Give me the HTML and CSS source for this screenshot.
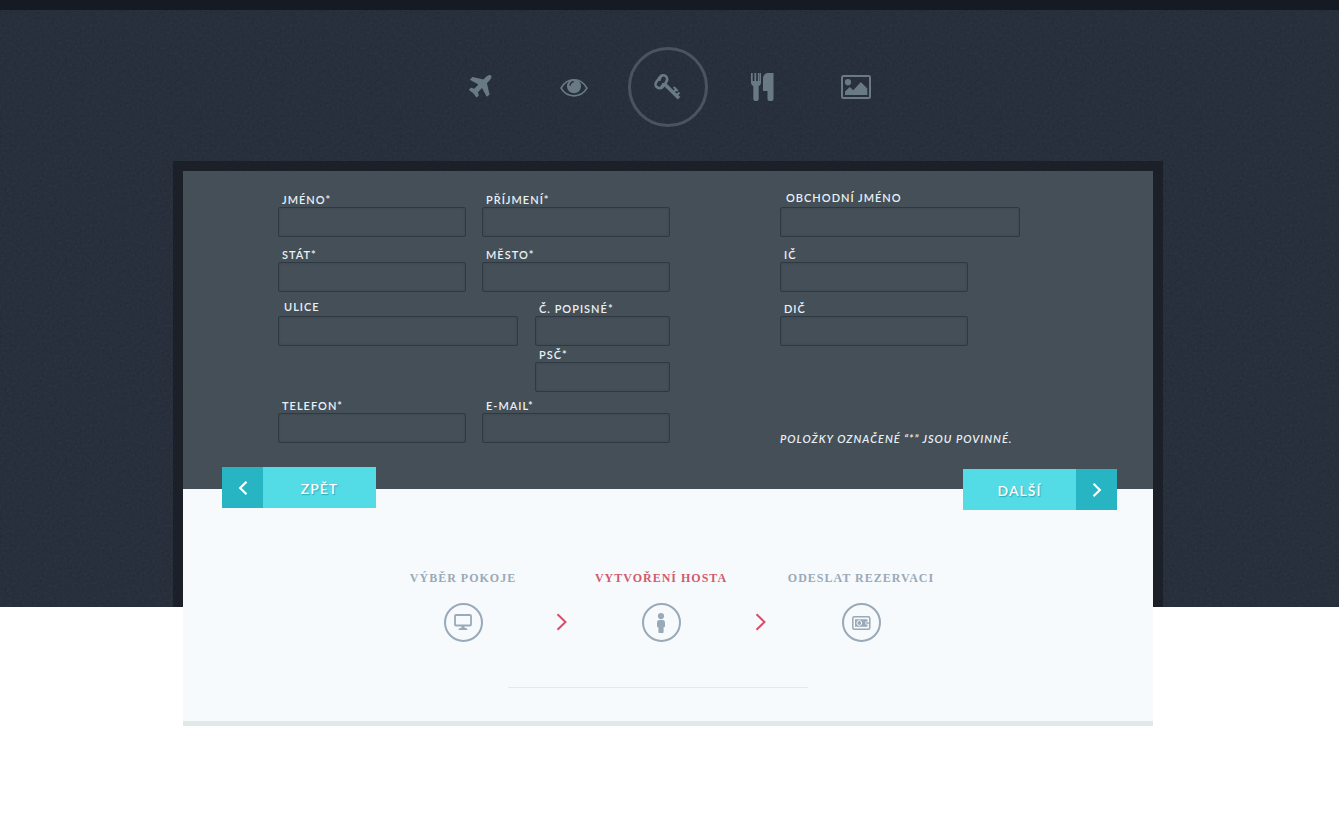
FILE: index.html
```html
<!DOCTYPE html>
<html lang="cs">
<head>
<meta charset="utf-8">
<meta name="viewport" content="width=device-width, initial-scale=1">
<title>Rezervace – vytvoření hosta</title>
<link rel="stylesheet" href="styles.css">
</head>
<body>
<div class="hero">
  <nav class="menu" aria-label="Hlavní menu">
    <a class="menu-link" href="#doprava" aria-label="Doprava">
      <svg width="23" height="24" viewBox="210 130 1400 1500"><path d="M1568 160q44 52 12 148t-108 172l-161 161 160 696q5 19-12 33l-128 96q-7 6-19 6-4 0-7-1-15-3-21-16l-279-508-259 259 53 194q5 17-8 31l-96 96q-9 9-23 9h-2q-15-2-24-13l-189-252-252-189q-11-7-13-23-1-13 9-25l96-97q9-9 23-9 6 0 8 1l194 53 259-259-508-279q-14-8-17-24-2-16 9-27l128-128q14-13 30-8l665 159 160-160q76-76 172-108t148 12z"/></svg>
    </a>
    <a class="menu-link" href="#okoli" aria-label="Okolí">
      <svg width="28" height="20" viewBox="0 0 28 20"><path d="M1 11.200C4 5.700 8.500 2.700 14 2.700s10 3 13 8.500c-3 5-7.500 7.700-13 7.700S4 16.200 1 11.200z" fill="none" stroke="currentColor" stroke-width="1.600"/><circle cx="14" cy="9.300" r="7"/><path d="M10 8.800c0-2.400 1.500-4 3.800-4" class="cut" stroke-width="1.500"/></svg>
    </a>
    <a class="menu-link menu-link--active" href="#ubytovani" aria-label="Ubytování" aria-current="page">
      <svg width="28" height="26" viewBox="0 0 28 26"><g fill="none" stroke="currentColor"><path d="M9.200 5.300 5.600 10.300" stroke-width="10.600" stroke-linecap="round"/><path d="M11 10.500 25 24.300" stroke-width="3.600"/><path d="M19 18.500l3.700-3.700M22.300 21.700l3.200-3.200M19.700 13l4 4" stroke-width="2"/></g><path d="M9.600 4.800 8.900 6.500M5.800 9.100 5 10.400" class="cut" stroke-width="4.600" stroke-linecap="round"/><path d="M9 6 5.800 10" class="cut" stroke-width="2.500"/></svg>
    </a>
    <a class="menu-link" href="#restaurace" aria-label="Restaurace">
      <svg width="23" height="28" viewBox="0 0 23 28"><path d="M0 0h1.700v8h1.700V0h1.800v8h1.700V0h1.700v8h.4V0h1v9.500c0 1.700-.8 2.800-2.300 3.500V26a2 2 0 0 1-2 2H4.300a2 2 0 0 1-2-2V13C.8 12.300 0 11.200 0 9.500zM22.500 0v26a2 2 0 0 1-2 2h-2a2 2 0 0 1-2-2v-8H12V5.500C12 2 14.500 0 18 0z"/></svg>
    </a>
    <a class="menu-link" href="#galerie" aria-label="Galerie">
      <svg width="30" height="24" viewBox="0 0 30 24"><rect x="1" y="1" width="28" height="22" rx="1.500" fill="none" stroke="currentColor" stroke-width="2"/><circle cx="7" cy="7.200" r="3.100"/><path d="M4 20v-3.500l4.800-4.600 3.500 3.300L19.800 7l6.500 6.500V20z"/></svg>
    </a>
  </nav>

  <main class="frame">
    <div class="booking">
      <form class="guest" action="#" method="post">
        <div class="guest-fields">
          <div class="person">
            <div class="row">
              <div class="field"><label for="jmeno">JMÉNO*</label><input id="jmeno" name="jmeno" type="text" required></div>
              <div class="field"><label for="prijmeni">PŘÍJMENÍ*</label><input id="prijmeni" name="prijmeni" type="text" required></div>
            </div>
            <div class="row">
              <div class="field"><label for="stat">STÁT*</label><input id="stat" name="stat" type="text" required></div>
              <div class="field"><label for="mesto">MĚSTO*</label><input id="mesto" name="mesto" type="text" required></div>
            </div>
            <div class="row row--address">
              <div class="field field--wide"><label for="ulice">ULICE</label><input id="ulice" name="ulice" type="text"></div>
              <div class="stack">
                <div class="field field--short"><label for="cislo">Č. POPISNÉ*</label><input id="cislo" name="cislo" type="text" required></div>
                <div class="field field--short"><label for="psc">PSČ*</label><input id="psc" name="psc" type="text" required></div>
              </div>
            </div>
            <div class="row row--contact">
              <div class="field"><label for="telefon">TELEFON*</label><input id="telefon" name="telefon" type="tel" required></div>
              <div class="field"><label for="email">E-MAIL*</label><input id="email" name="email" type="email" required></div>
            </div>
          </div>
          <div class="company">
            <div class="row">
              <div class="field field--wide"><label for="firma">OBCHODNÍ JMÉNO</label><input id="firma" name="firma" type="text"></div>
            </div>
            <div class="row">
              <div class="field"><label for="ic">IČ</label><input id="ic" name="ic" type="text"></div>
            </div>
            <div class="row row--address">
              <div class="field"><label for="dic">DIČ</label><input id="dic" name="dic" type="text"></div>
            </div>
            <p class="note">POLOŽKY OZNAČENÉ “*” JSOU POVINNÉ.</p>
          </div>
        </div>
        <div class="actions">
          <button class="button button--back" type="button"><span class="button-icon"><svg width="10" height="14" viewBox="0 0 10 14"><path d="M8.500 .8 2.200 7l6.300 6.200"/></svg></span><span class="button-text">ZPĚT</span></button>
          <button class="button button--next" type="submit"><span class="button-text">DALŠÍ</span><span class="button-icon"><svg width="10" height="14" viewBox="0 0 10 14"><path d="M1.500 .8 7.800 7l-6.300 6.200"/></svg></span></button>
        </div>
      </form>

      <section class="progress" aria-label="Průběh rezervace">
        <ol class="steps">
          <li class="step">
            <span class="step-name">VÝBĚR POKOJE</span>
            <span class="step-icon"><svg width="18" height="17" viewBox="0 0 18 17"><rect x="1" y="1" width="16" height="10.500" rx="1" fill="none" stroke="currentColor" stroke-width="1.800"/><path d="M7.500 12h3v1.800c2 .2 3 .9 3 2.200h-9c0-1.300 1-2 3-2.200z"/></svg></span>
          </li>
          <li class="arrow" aria-hidden="true"><svg width="12" height="18" viewBox="0 0 12 18"><path d="M1.500 1.200 9.500 9 1.500 16.800"/></svg></li>
          <li class="step step--current" aria-current="step">
            <span class="step-name">VYTVOŘENÍ HOSTA</span>
            <span class="step-icon"><svg width="8" height="20" viewBox="0 0 8 20"><circle cx="4" cy="3.100" r="3.100"/><path d="M2.200 7h3.600C7.200 7 8 8.200 8 9.800V13c0 .8-.5 1.300-1.400 1.300V19c0 .7-.4 1-1 1H2.400c-.6 0-1-.3-1-1v-4.700C.5 14.300 0 13.800 0 13V9.800C0 8.200.8 7 2.200 7z"/></svg></span>
          </li>
          <li class="arrow" aria-hidden="true"><svg width="12" height="18" viewBox="0 0 12 18"><path d="M1.500 1.200 9.500 9 1.500 16.800"/></svg></li>
          <li class="step">
            <span class="step-name">ODESLAT REZERVACI</span>
            <span class="step-icon"><svg width="19" height="14" viewBox="0 0 19 14"><rect x=".8" y=".8" width="17" height="12.400" rx="1.500" fill="none" stroke="currentColor" stroke-width="1.500"/><path d="M3 3.300h12.500v2.200h-2v3h2v2.200H3z"/><circle cx="7.300" cy="7" r="2.400" class="ring"/><path d="M14 7h4" fill="none" stroke="currentColor" stroke-width="1.400"/></svg></span>
          </li>
        </ol>
        <hr class="divider">
      </section>
    </div>
  </main>
</div>
</body>
</html>
```

FILE: styles.css
```css
* {
  box-sizing: border-box;
}

body {
  min-height: 100vh;
  margin: 0;
  background: #fff;
  font-family: Lato, "Open Sans", sans-serif;
}

/* Dark textured band; the booking card hangs out of its lower edge */
.hero {
  display: flex;
  flex-direction: column;
  align-items: center;
  padding-right: 3px;
  border-top: 10px solid #161a23;
  background-color: #222a37;
  background-image: url("data:image/svg+xml,%3Csvg xmlns='http://www.w3.org/2000/svg' width='200' height='200'%3E%3Cfilter id='n'%3E%3CfeTurbulence type='fractalNoise' baseFrequency='0.4' numOctaves='2' stitchTiles='stitch'/%3E%3CfeColorMatrix type='saturate' values='0'/%3E%3C/filter%3E%3Crect width='200' height='200' filter='url(%23n)' opacity='0.07'/%3E%3C/svg%3E");
}

.menu {
  display: flex;
  align-items: center;
  gap: 14px;
  padding: 37px 0 34px;
}

.menu-link {
  display: flex;
  align-items: center;
  justify-content: center;
  width: 80px;
  height: 80px;
  border-radius: 50%;
  color: #6a7a84;
}

.menu-link--active {
  border: 3px solid #4a545f;
}

.menu-link svg,
.step-icon svg {
  fill: currentColor;
}

.menu-link .cut {
  fill: none;
  stroke: #28303d;
}

.frame {
  display: flex;
  width: 100%;
  max-width: 990px;
  padding: 10px 10px 0;
  background: rgba(20, 22, 28, 0.6);
}

.booking {
  flex: 1;
  margin-bottom: -119px;
  border-bottom: 5px solid #e0e9e7;
  background: #f6fafd;
}

.guest {
  display: flow-root;
  padding-top: 21px;
  background: #454f58;
}

.guest-fields {
  display: flex;
  gap: 110px;
  padding: 0 95px;
}

.person {
  width: 392px;
}

.company {
  display: flex;
  flex: 1;
  flex-direction: column;
}

.row {
  display: flex;
  justify-content: space-between;
}

.row + .row {
  margin-top: 10px;
}

.row + .row--address {
  margin-top: 9px;
}

.row + .row--contact {
  margin-top: 6px;
}

.stack {
  display: flex;
  flex-direction: column;
  gap: 1px;
}

.field {
  width: 188px;
}

.field--wide {
  width: 240px;
}

.field--short {
  width: 135px;
}

.field label {
  display: block;
  height: 15px;
  padding-left: 4px;
  color: #e9f1f7;
  font-size: 11px;
  font-weight: 600;
  line-height: 16px;
  letter-spacing: 1px;
  white-space: nowrap;
}

.field--wide label {
  padding-left: 6px;
  line-height: 12px;
}

.field input {
  display: block;
  width: 100%;
  height: 30px;
  padding: 0 8px;
  border: 1px solid #2f3942;
  border-radius: 2px;
  background: transparent;
  box-shadow: inset 0 0 2px rgba(47, 57, 66, 0.6);
  color: #e9f1f7;
  font: 13px Lato, sans-serif;
}

.note {
  margin: auto 0 0;
  color: #e9f1f7;
  font-size: 11px;
  font-style: italic;
  font-weight: 600;
  line-height: 9px;
  letter-spacing: 1px;
  white-space: nowrap;
}

.actions {
  position: relative;
  display: flex;
  justify-content: space-between;
  min-height: 43px;
  margin: 24px 36px -21px 39px;
}

.button {
  display: flex;
  width: 154px;
  height: 41px;
  padding: 0;
  border: 0;
  background: #53dbe6;
  color: #fff;
  font: 600 14px/44px Lato, sans-serif;
  letter-spacing: 1px;
  text-shadow: 1px 1px 1px rgba(20, 120, 135, 0.5);
}

.button--next {
  align-self: flex-end;
}

.button-text {
  flex: 1;
  text-align: center;
}

.button-icon {
  display: flex;
  align-items: center;
  justify-content: center;
  width: 41px;
  height: 41px;
  background: #27b5c3;
}

.button-icon svg {
  fill: none;
  stroke: #fff;
  stroke-width: 2.2;
}

.progress {
  padding: 80px 20px 33px 0;
}

.steps {
  display: grid;
  grid-template-columns: 160px 38px 160px 40px 160px;
  justify-content: center;
  margin: 0 0 45px;
  padding: 0 0 0 8px;
  list-style: none;
}

.step {
  display: flex;
  flex-direction: column;
  align-items: center;
  gap: 16px;
  color: #9aa9b7;
}

.step-name {
  font: 700 12px/18px "Liberation Serif", serif;
  letter-spacing: 1px;
  white-space: nowrap;
}

.step--current .step-name {
  color: #d35b6c;
}

.step-icon {
  display: flex;
  align-items: center;
  justify-content: center;
  width: 39px;
  height: 39px;
  border: 2px solid #9aa9b7;
  border-radius: 50%;
}

.step-icon .ring {
  fill: none;
  stroke: #f6fafd;
}

.arrow {
  display: flex;
  align-items: flex-end;
  justify-content: center;
  padding-bottom: 11px;
}

.arrow svg {
  fill: none;
  stroke: #dc4c68;
  stroke-width: 2;
}

.divider {
  width: 300px;
  height: 1px;
  margin: 0 auto;
  border: 0;
  background: #e3e9ec;
}
```
